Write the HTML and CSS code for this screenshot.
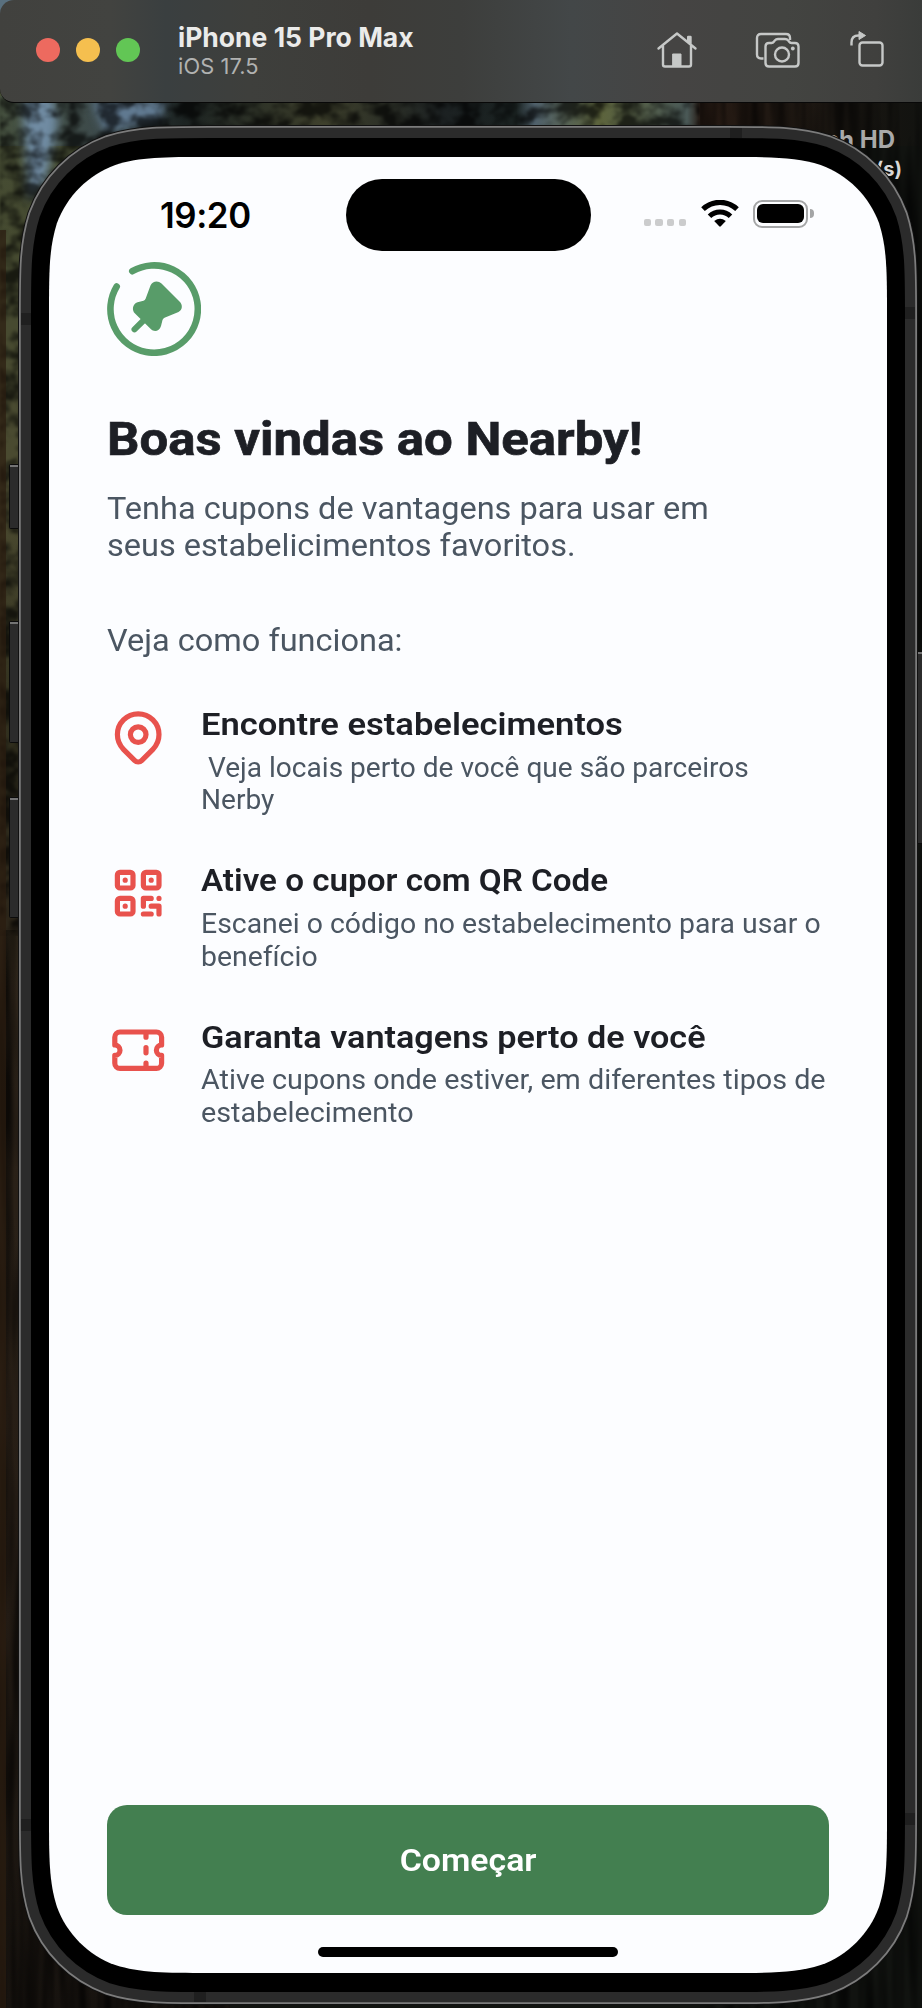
FILE: index.html
```html
<!DOCTYPE html>
<html lang="pt-BR">
<head>
<meta charset="utf-8">
<title>Nearby</title>
<link rel="stylesheet" href="styles.css">
</head>
<body>
<div class="desktop">
  <svg class="backdrop" width="922" height="2008" viewBox="0 0 922 2008" aria-hidden="true">
    <defs>
      <linearGradient id="left" x1="0" y1="0" x2="0" y2="1">
        <stop offset="0" stop-color="#48513a"/><stop offset=".12" stop-color="#454a30"/>
        <stop offset=".25" stop-color="#4b4a30"/><stop offset=".35" stop-color="#32311f"/>
        <stop offset=".5" stop-color="#2b2218"/><stop offset=".75" stop-color="#261d15"/>
        <stop offset="1" stop-color="#17130f"/>
      </linearGradient>
      <linearGradient id="top" x1="0" y1="0" x2="1" y2="0">
        <stop offset="0" stop-color="#46513f"/><stop offset=".1" stop-color="#3d4a4a"/>
        <stop offset=".2" stop-color="#1c2322"/><stop offset=".35" stop-color="#3e402c"/>
        <stop offset=".48" stop-color="#1c2122"/><stop offset=".56" stop-color="#1a2221"/>
        <stop offset=".58" stop-color="#50616c"/><stop offset=".65" stop-color="#5d643c"/>
        <stop offset=".745" stop-color="#4b5a58"/><stop offset=".76" stop-color="#261a13"/>
        <stop offset="1" stop-color="#121310"/>
      </linearGradient>
      <filter id="foliage" x="0" y="0" width="100%" height="100%">
        <feTurbulence type="fractalNoise" baseFrequency=".05 .06" numOctaves="3" seed="8"/>
        <feColorMatrix values="0 0 0 0 0  0 0 0 0 0  0 0 0 0 0  3.200 0 0 0 -1.150"/>
        <feGaussianBlur stdDeviation="1"/>
      </filter>
      <filter id="bark" x="0" y="0" width="100%" height="100%">
        <feTurbulence type="fractalNoise" baseFrequency=".08 .006" numOctaves="2" seed="3"/>
        <feColorMatrix values="0 0 0 0 0  0 0 0 0 0  0 0 0 0 0  2.500 0 0 0 -.9"/>
      </filter>
      <filter id="soft" x="-30%" y="-30%" width="160%" height="160%"><feGaussianBlur stdDeviation="5"/></filter>
      <path id="outline" d="M209.500 156H726.500C772.700 156 795.800 156 820.700 163.900C847.900 173.800 869.200 195.100 879.100 222.300C887 247.200 887 270.300 887 316.500V1813.500C887 1859.700 887 1882.800 879.100 1907.700C869.200 1934.900 847.900 1956.200 820.700 1966.100C795.800 1974 772.700 1974 726.500 1974H209.500C163.300 1974 140.200 1974 115.300 1966.100C88.100 1956.200 66.800 1934.900 56.900 1907.700C49 1882.800 49 1859.700 49 1813.500V316.500C49 270.300 49 247.200 56.900 222.300C66.800 195.100 88.100 173.800 115.300 163.900C140.200 156 163.300 156 209.500 156Z"/>
    </defs>
    <rect width="922" height="2008" fill="#111310"/>
    <rect width="230" height="2008" fill="url(#left)"/>
    <rect y="96" width="922" height="50" fill="url(#top)"/>
    <path fill="#59707f" d="M0 0h14v8L0 16z"/>
    <g filter="url(#soft)">
      <path fill="#6f8ba2" d="M22 96h30l6 26-12 60-18 18z"/>
      <path fill="#607990" d="M92 100h75l-8 22-55 10z"/>
    </g>
    <rect y="96" width="700" height="840" fill="#000" opacity=".65" filter="url(#foliage)"/>
    <rect x="0" y="930" width="230" height="1078" filter="url(#bark)" opacity=".7"/>
    <rect x="700" y="96" width="222" height="1912" filter="url(#bark)" opacity=".6"/>
    <rect y="230" width="6" height="1778" fill="#2b1c10" opacity=".7"/>
    <text class="disk disk-name" x="895" y="148" text-anchor="end">ch HD</text>
    <text class="disk disk-items" x="902" y="175.500" text-anchor="end">(s)</text>

    <g fill="#2b2b2b" stroke="#0b0b0b">
      <rect x="9.500" y="464.500" width="12" height="64" rx="1"/>
      <rect x="9.500" y="621.500" width="12" height="121" rx="1"/>
      <rect x="9.500" y="797.500" width="12" height="120" rx="1"/>
      <rect x="915" y="651.500" width="12" height="192"/>
    </g>
    <path d="M10 466h10M10 623h10M10 799h10M916 653h6" stroke="#747474" stroke-width="2"/>
    <use href="#outline" class="shell-shadow"/>
    <use href="#outline" class="shell-edge"/>
    <use href="#outline" class="shell-frame"/>
    <path fill="#1f1f1f" d="M21 313h10v12H21zM21 1819h10v12H21zM905 307h10v12h-10zM905 1813h10v12h-10zM730 128h12v10h-12zM194 1992h12v10h-12z"/>
    <use href="#outline" class="shell-bezel"/>
    <path fill="#fcfdff" d="M209.500 157H726.500C772.700 157 795.800 157 820.700 164.900C847.900 174.800 869.200 196.100 879.100 223.300C887 248.200 887 271.300 887 317.500V1812.500C887 1858.700 887 1881.800 879.100 1906.700C869.200 1933.900 847.900 1955.200 820.700 1965.100C795.800 1973 772.700 1973 726.500 1973H209.500C163.300 1973 140.200 1973 115.300 1965.100C88.100 1955.200 66.800 1933.900 56.900 1906.700C49 1881.800 49 1858.700 49 1812.500V317.500C49 271.300 49 248.200 56.900 223.300C66.800 196.100 88.100 174.800 115.300 164.900C140.200 157 163.300 157 209.500 157Z"/>
  </svg>

  <header class="titlebar">
    <div class="lights"><i class="light close"></i><i class="light minimize"></i><i class="light expand"></i></div>
    <div class="window-title">
      <div class="device">iPhone 15 Pro Max</div>
      <div class="os">iOS 17.5</div>
    </div>
    <div class="tools">
      <svg width="42" height="40" viewBox="0 0 42 40" fill="none" stroke="#c6c8c7" stroke-width="2.400" stroke-linecap="round" stroke-linejoin="round">
        <path d="M2.500 18.500 21 3.500 39.500 18.500M7 16v18.500q0 2 2 2h24q2 0 2-2V16M32.200 12V7h2.300V14"/>
        <path d="M17 24h8v12h-8z" fill="#c6c8c7" stroke-width="1"/>
      </svg>
      <svg width="46" height="40" viewBox="0 0 46 40" fill="none" stroke="#c6c8c7" stroke-width="2.400" stroke-linejoin="round">
        <path d="M9.500 28.500H7q-4 0-4-4V8q0-4 4-4h25q4 0 4 4v2"/>
        <path d="M15 13h2.500q1.500 0 2.500-1.500l1-1.200q1-1.300 3-1.300h7q2 0 3 1.300l1 1.200q1 1.500 2.500 1.500H41q3.500 0 3.500 3.500v16.500q0 3.500-3.500 3.500H15q-3.500 0-3.500-3.500V16.500q0-3.500 3.500-3.500z"/>
        <circle cx="28" cy="24.500" r="7"/><circle cx="38.800" cy="18.500" r="1.900" fill="#c6c8c7" stroke="none"/>
      </svg>
      <svg width="36" height="40" viewBox="0 0 36 40" fill="none" stroke="#c6c8c7" stroke-width="2.400">
        <rect x="10.500" y="12.500" width="23" height="23" rx="3"/>
        <path d="M2.500 15.500v-3q0-7 7-7h2"/><path d="M10 1.500v8l6.500-4z" fill="#c6c8c7" stroke-width="1"/>
      </svg>
    </div>
  </header>

  <main class="screen">
    <div class="status">
      <time class="clock">19:20</time>
      <div class="island"></div>
      <div class="indicators">
        <div class="signal"><i></i><i></i><i></i><i></i></div>
        <svg class="wifi" width="38" height="28" viewBox="0 0 38 28" fill="none" stroke="#000">
          <path stroke-width="5.200" d="M2 9.200A24.500 24.500 0 0 1 36 9.200"/>
          <path stroke-width="5" d="M8.500 16.200A15 15 0 0 1 29.500 16.200"/>
          <path fill="#000" stroke="none" d="M13.200 21Q19 16.500 24.800 21L19.800 26.300Q19 27 18.200 26.300z"/>
        </svg>
        <div class="battery"><div class="case"><div class="charge"></div></div><i class="nub"></i></div>
      </div>
    </div>

    <svg class="logo" width="94" height="94" viewBox="0 0 94 94">
      <path d="M25.300 9.200A43.700 43.700 0 1 1 9.700 24.500" fill="none" stroke="#589c69" stroke-width="6.600" stroke-linecap="round"/>
      <path d="M27.500 67.300 39 56" stroke="#589c69" stroke-width="6" stroke-linecap="round"/>
      <path fill="#589c69" d="M43.500 23.500C45.500 19 51 18 54.500 21.500L72.500 39.500C76 43 75.500 48 71.500 50L57.500 55.800Q56 56.500 55.500 58L54 64C52.500 69 47.500 70.500 44 67.300L28 51.500C24.500 48 25.500 42 30.500 40.200L36.500 38.700Q38 38.200 38.600 36.700Z"/>
    </svg>
    <h1 class="heading">Boas vindas ao Nearby!</h1>
    <p class="lead">Tenha cupons de vantagens para usar em<br>seus estabelicimentos favoritos.</p>
    <p class="how">Veja como funciona:</p>

    <ul class="steps">
      <li class="step find">
        <svg class="icon" viewBox="0 0 24 24"><path d="M9 11a3 3 0 1 0 6 0a3 3 0 0 0-6 0"/><path d="M17.657 16.657l-4.243 4.243a2 2 0 0 1-2.827 0l-4.244-4.243a8 8 0 1 1 11.314 0z"/></svg>
        <div>
          <h2 class="step-title">Encontre estabelecimentos</h2>
          <p class="step-text"> Veja locais perto de você que são parceiros<br>Nerby</p>
        </div>
      </li>
      <li class="step scan">
        <svg class="icon" viewBox="0 0 24 24"><rect x="4" y="4" width="6" height="6" rx="1"/><rect x="14" y="4" width="6" height="6" rx="1"/><rect x="4" y="14" width="6" height="6" rx="1"/><path d="M7 17v.01M7 7v.01M17 7v.01M14 14h3M20 14v.01M14 14v3M14 20h3M17 17h3M20 17v3"/></svg>
        <div>
          <h2 class="step-title">Ative o cupor com QR Code</h2>
          <p class="step-text">Escanei o código no estabelecimento para usar o<br>benefício</p>
        </div>
      </li>
      <li class="step save">
        <svg class="icon" viewBox="0 0 24 24"><path d="M15 5v2M15 11v2M15 17v2M5 5h14a2 2 0 0 1 2 2v3a2 2 0 0 0 0 4v3a2 2 0 0 1-2 2H5a2 2 0 0 1-2-2v-3a2 2 0 0 0 0-4V7a2 2 0 0 1 2-2"/></svg>
        <div>
          <h2 class="step-title">Garanta vantagens perto de você</h2>
          <p class="step-text">Ative cupons onde estiver, em diferentes tipos de<br>estabelecimento</p>
        </div>
      </li>
    </ul>

    <button class="start" type="button"><span class="start-label">Começar</span></button>
    <div class="home-indicator"></div>
  </main>
</div>
</body>
</html>
```
FILE: styles.css
```css
* { box-sizing: border-box; margin: 0; padding: 0; }
body { width: 922px; height: 2008px; overflow: hidden; background: #111310; font-family: Roboto, "Liberation Sans", sans-serif; }
.desktop { position: relative; width: 922px; height: 2008px; display: flex; flex-direction: column; }
.backdrop { position: absolute; top: 0; left: 0; }
.disk { font-family: Inter, sans-serif; font-weight: 700; }
.disk-name { font-size: 24px; fill: #a9a9a9; }
.disk-items { font-size: 20px; fill: #d8d8d8; }
.shell-shadow { fill: none; stroke: #111; stroke-width: 62px; }
.shell-edge { fill: none; stroke: #7c7c7c; stroke-width: 60px; }
.shell-frame { fill: none; stroke: #2b2b2b; stroke-width: 56.500px; }
.shell-bezel { fill: none; stroke: #000; stroke-width: 36px; }

.titlebar { position: relative; height: 103px; display: flex; align-items: center; padding: 0 37px 3px 36px; border-bottom: 1px solid #080808; border-radius: 14px 0 0 14px;
  background: linear-gradient(90deg, #41413e 0, #424340 12%, #3a3f40 18%, #3e3f3c 27%, #3d3c39 40%, #3d3e3c 50%, #434748 62%, #454443 73%, #434441 85%, #40403e 95%, #3a3c3a 100%); }
.lights { display: flex; gap: 16px; width: 142px; }
.light { width: 24px; height: 24px; border-radius: 50%; }
.close { background: #ed6a5f; }
.minimize { background: #f5bf4f; }
.expand { background: #62c655; }
.window-title { flex: 1; font-family: Inter, sans-serif; white-space: nowrap; padding-top: 1px; }
.device { color: #ebebea; font-weight: 700; font-size: 26.500px; line-height: 32px; letter-spacing: 0; }
.os { color: #b1b2b1; font-size: 21.800px; line-height: 27px; letter-spacing: .1px; }
.tools { display: flex; align-items: center; gap: 49px; }
.tools svg:first-child { margin-right: 7px; }

.screen { position: relative; width: 838px; height: 1816px; margin: 54px 0 0 49px; padding: 0 58px; display: flex; flex-direction: column; }
.status { display: grid; grid-template-columns: 238.500px 245px 1fr; align-items: center; height: 72px; margin-top: 22px; flex: none; }
.clock { font: 600 34.800px/72px Inter, sans-serif; letter-spacing: -.4px; padding-left: 53px; margin-top: -1px; }
.island { height: 72px; border-radius: 36px; background: #000; }
.indicators { display: flex; align-items: center; padding-left: 53px; height: 72px; padding-bottom: 3px; }
.signal { display: flex; gap: 4.300px; margin-top: 18px; }
.signal i { width: 7.400px; height: 7.400px; border-radius: 2px; background: #cbcccd; }
.wifi { margin-left: 15px; flex: none; }
.battery { display: flex; align-items: center; gap: 2px; margin-left: 14px; }
.case { width: 55px; height: 28px; border: 2px solid #a4a5a6; border-radius: 9px; padding: 2.300px; }
.charge { height: 100%; background: #000; border-radius: 6px; }
.nub { width: 4px; height: 9px; background: #a4a5a6; border-radius: 0 4px 4px 0; }

.heading, .lead, .how, .step-title, .step-text { width: max-content; transform-origin: 0 50%; white-space: pre; }
.logo { flex: none; margin: 11px 0 54.500px; }
.heading { color: #1d1f25; font-weight: 700; font-size: 46.800px; line-height: 56px; transform: scaleX(1.088); -webkit-text-stroke: .7px #1d1f25; }
.lead, .how { color: #4b5662; font-size: 31.200px; line-height: 37px; transform: scaleX(1.042); }
.lead { margin-top: 23px; }
.how { margin-top: 58.500px; }
.steps { list-style: none; display: flex; flex-direction: column; gap: 45.800px; margin-top: 47px; }
.step { display: flex; gap: 31.600px; height: 110.600px; }
.icon { width: 62.400px; height: 62.400px; flex: none; fill: none; stroke: #e8524d; stroke-width: 2; stroke-linecap: round; stroke-linejoin: round; }
.step-title { color: #1d1f25; font-weight: 600; font-size: 31.200px; line-height: 37px; }
.step-text { color: #4b5662; font-size: 27.300px; line-height: 32.700px; margin-top: 8.500px; }
.find .step-title { transform: scaleX(1.107); }
.find .step-text { transform: scaleX(1.028); }
.scan .step-title { transform: scaleX(1.064); }
.scan .step-text { transform: scaleX(1.040); }
.save .step-title { transform: scaleX(1.096); }
.save .step-text { transform: scaleX(1.053); }
.start { margin-top: auto; flex: none; height: 110px; border: 0; border-radius: 20px; background: #437f50; color: #fff; font: 600 31.200px/37px Roboto, sans-serif; }
.start-label { display: inline-block; transform: scaleX(1.085); }
.home-indicator { width: 300px; height: 10px; border-radius: 5px; background: #000; margin: 32px auto 16px; flex: none; }
```
